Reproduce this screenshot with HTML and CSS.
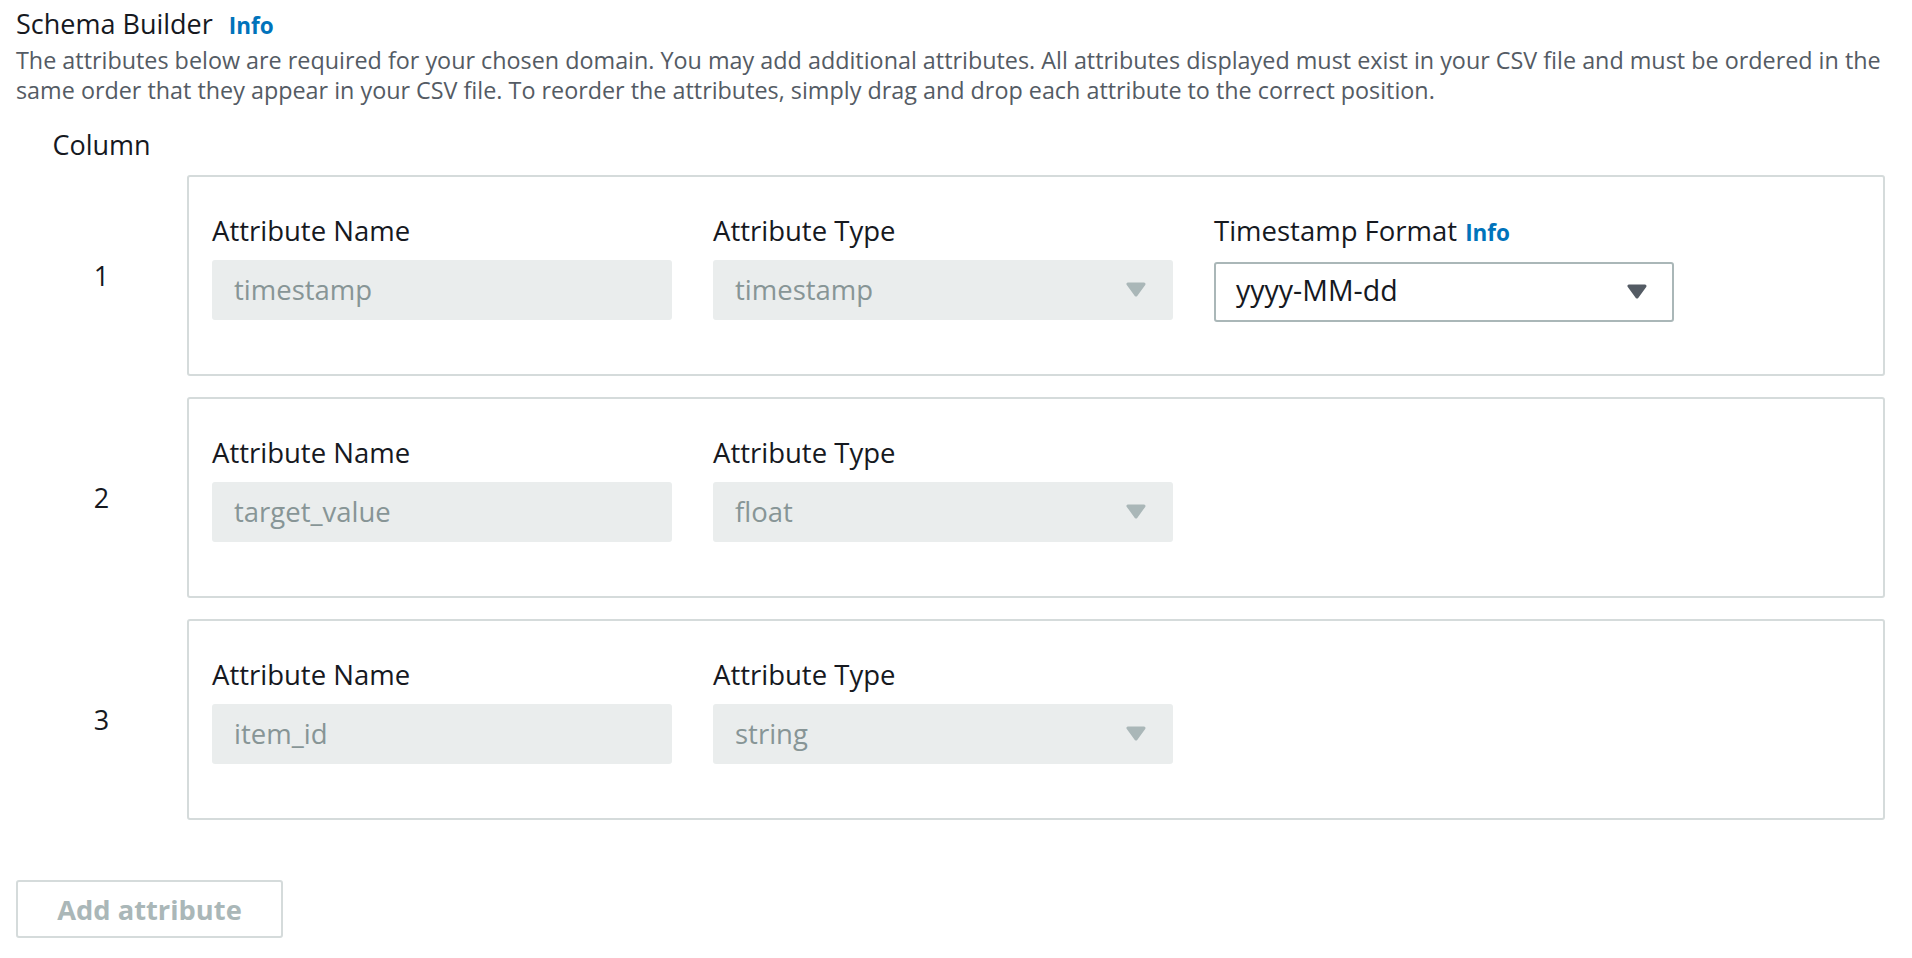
FILE: index.html
```html
<!DOCTYPE html>
<html lang="en">
<head>
<meta charset="utf-8">
<title>Schema Builder</title>
<link rel="stylesheet" href="styles.css">
</head>
<body>
<div class="page">
  <h2 class="title">Schema Builder<a class="info info-title" href="#">Info</a></h2>
  <p class="desc">The attributes below are required for your chosen domain. You may add additional attributes. All attributes displayed must exist in your CSV file and must be ordered in the same order that they appear in your CSV file. To reorder the attributes, simply drag and drop each attribute to the correct position.</p>

  <div class="col-head">Column</div>

  <div class="rows">
    <div class="row">
      <div class="num">1</div>
      <div class="card">
        <div class="field">
          <div class="label">Attribute Name</div>
          <div class="input disabled">timestamp</div>
        </div>
        <div class="field">
          <div class="label">Attribute Type</div>
          <div class="input disabled select">timestamp
            <svg class="caret" width="20" height="15" viewBox="0 0 20 15"><path d="M2 2 L18 2 L10 13 Z" /></svg>
          </div>
        </div>
        <div class="field">
          <div class="label">Timestamp Format<a class="info info-label" href="#">Info</a></div>
          <div class="input enabled select">yyyy-MM-dd
            <svg class="caret" width="20" height="15" viewBox="0 0 20 15"><path d="M2 2 L18 2 L10 13 Z" /></svg>
          </div>
        </div>
      </div>
    </div>

    <div class="row">
      <div class="num">2</div>
      <div class="card">
        <div class="field">
          <div class="label">Attribute Name</div>
          <div class="input disabled">target_value</div>
        </div>
        <div class="field">
          <div class="label">Attribute Type</div>
          <div class="input disabled select">float
            <svg class="caret" width="20" height="15" viewBox="0 0 20 15"><path d="M2 2 L18 2 L10 13 Z" /></svg>
          </div>
        </div>
      </div>
    </div>

    <div class="row">
      <div class="num">3</div>
      <div class="card">
        <div class="field">
          <div class="label">Attribute Name</div>
          <div class="input disabled">item_id</div>
        </div>
        <div class="field">
          <div class="label">Attribute Type</div>
          <div class="input disabled select">string
            <svg class="caret" width="20" height="15" viewBox="0 0 20 15"><path d="M2 2 L18 2 L10 13 Z" /></svg>
          </div>
        </div>
      </div>
    </div>
  </div>

  <button class="add-btn" type="button" disabled>Add attribute</button>
</div>
</body>
</html>
```

FILE: styles.css
```css
* {
  box-sizing: border-box;
}

html, body {
  margin: 0;
  padding: 0;
  background: #ffffff;
}

body {
  font-family: "Open Sans", "Liberation Sans", Arial, sans-serif;
  color: #16191f;
}

.page {
  padding: 6px 27px 0 16px;
}

.title {
  margin: 0;
  font-size: 27px;
  line-height: 36px;
  font-weight: 400;
  color: #16191f;
}

.info {
  color: #0073bb;
  font-weight: 700;
  text-decoration: none;
}

.info-title {
  font-size: 22.5px;
  margin-left: 16px;
}

.info-label {
  font-size: 22.5px;
  margin-left: 8px;
}

.desc {
  margin: 1px 0 0;
  font-size: 23.35px;
  line-height: 30px;
  color: #545b64;
}

.col-head {
  width: 171px;
  margin-top: 22px;
  text-align: center;
  font-size: 27px;
  line-height: 36px;
}

.rows {
  margin-top: 12px;
  display: flex;
  flex-direction: column;
  gap: 21px;
}

.row {
  display: flex;
  align-items: stretch;
}

.num {
  width: 171px;
  flex: none;
  display: flex;
  align-items: center;
  justify-content: center;
  font-size: 27px;
  line-height: 36px;
}

.card {
  flex: 1;
  height: 201px;
  border: 2px solid #d5dbdb;
  border-radius: 3px;
  padding: 36px 23px 53px 23px;
  display: flex;
  gap: 41px;
}

.field {
  width: 460px;
  flex: none;
}

.label {
  font-size: 27.5px;
  line-height: 36px;
  margin-bottom: 11px;
  color: #16191f;
}

.input {
  position: relative;
  height: 60px;
  border-radius: 3px;
  padding: 0 22px;
  font-size: 27.5px;
  line-height: 60px;
}

.input.disabled {
  background: #eaeded;
  color: #879596;
}

.input.enabled {
  background: #ffffff;
  border: 2px solid #aab7b8;
  border-radius: 3px;
  line-height: 52px;
  padding-left: 20px;
  font-size: 28.5px;
  color: #16191f;
}

.caret {
  position: absolute;
  right: 27px;
  top: 50%;
  margin-top: -8px;
}

.caret path {
  stroke-linejoin: round;
  stroke-width: 3px;
}

.disabled .caret path {
  fill: #aab7b8;
  stroke: #aab7b8;
}

.enabled .caret {
  right: 25px;
}

.enabled .caret path {
  fill: #545b64;
  stroke: #545b64;
}

.add-btn {
  display: block;
  margin-top: 60px;
  width: 267px;
  height: 58px;
  padding: 0;
  background: #ffffff;
  border: 2px solid #d5dbdb;
  border-radius: 3px;
  font-family: "Open Sans", "Liberation Sans", Arial, sans-serif;
  font-size: 27.3px;
  font-weight: 700;
  color: #aab7b8;
}
```
